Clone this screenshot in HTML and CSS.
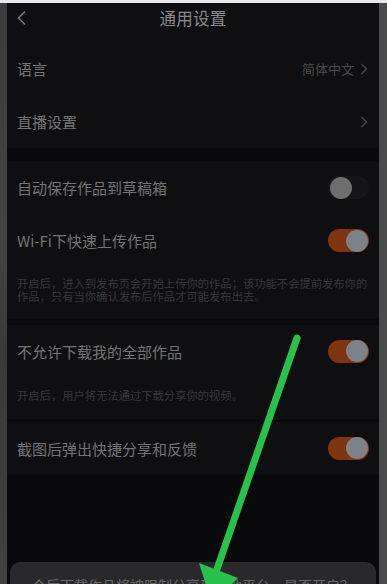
FILE: index.html
```html
<!DOCTYPE html>
<html lang="zh">
<head>
<meta charset="utf-8">
<link rel="stylesheet" href="styles.css">
</head>
<body>
<div class="topline"></div>
<div class="frame">
  <div class="side side-left"></div>
  <div class="screen">
    <div class="header">
      <svg class="back" width="12" height="16" viewBox="0 0 12 16"><path d="M9 1.5 L2.5 8 L9 14.5" fill="none" stroke="#7a7a7a" stroke-width="1.6"/></svg>
      <div class="title">通用设置</div>
    </div>

    <div class="group first">
      <div class="row"><span class="label">语言</span><span class="value">简体中文<svg class="chev" width="8" height="12" viewBox="0 0 8 12"><path d="M1.5 1 L6.5 6 L1.5 11" fill="none" stroke="#4a4a4a" stroke-width="1.4"/></svg></span></div>
      <div class="row"><span class="label">直播设置</span><span class="value"><svg class="chev" width="8" height="12" viewBox="0 0 8 12"><path d="M1.5 1 L6.5 6 L1.5 11" fill="none" stroke="#4a4a4a" stroke-width="1.4"/></svg></span></div>
    </div>

    <div class="group g2">
      <div class="row"><span class="label">自动保存作品到草稿箱</span><span class="toggle off"><span class="knob"></span></span></div>
      <div class="row"><span class="label">Wi-Fi下快速上传作品</span><span class="toggle on"><span class="knob"></span></span></div>
      <div class="desc d1">开启后，进入到发布页会开始上传你的作品；该功能不会提前发布你的作品，只有当你确认发布后作品才可能发布出去。</div>
    </div>

    <div class="group g3">
      <div class="row"><span class="label">不允许下载我的全部作品</span><span class="toggle on"><span class="knob"></span></span></div>
      <div class="desc d2">开启后，用户将无法通过下载分享你的视频。</div>
    </div>

    <div class="group g4">
      <div class="row"><span class="label">截图后弹出快捷分享和反馈</span><span class="toggle on"><span class="knob"></span></span></div>
    </div>

    <div class="filler"></div>
    <div class="sheet"><div class="sheet-text">今后下载作品将被限制分享到其他平台，是否开启？</div></div>
  </div>
  <div class="side side-right"></div>
</div>

<svg class="arrow" width="387" height="584" viewBox="0 0 387 584">
  <line x1="297" y1="338" x2="216" y2="572" stroke="#27c24b" stroke-width="7" stroke-linecap="round"/>
  <polygon points="199,563 238,578 212,604" fill="#27c24b"/>
</svg>
</body>
</html>
```

FILE: styles.css
```css
html, body {
  margin: 0;
  padding: 0;
}
body {
  width: 387px;
  height: 584px;
  overflow: hidden;
  background: #0b0b0d;
  font-family: "Noto Sans CJK SC", "Noto Sans", sans-serif;
  position: relative;
}
.topline {
  height: 3px;
  background: #e9e9e9;
}
.frame {
  display: flex;
  height: 581px;
}
.side-left {
  width: 7px;
  background: linear-gradient(180deg, #3c3c3c, #444 40%, #3a3a3a 60%, #404040);
}
.side-right {
  width: 8px;
  background: #4b4b4b;
}
.screen {
  flex: 1;
  display: flex;
  flex-direction: column;
  background: #0a0a0c;
  overflow: hidden;
}
.header {
  height: 30px;
  display: flex;
  align-items: center;
  justify-content: center;
  position: relative;
  background: #0f0f11;
}
.back {
  position: absolute;
  left: 9px;
  top: 7px;
}
.title {
  color: #8a8a8a;
  font-size: 16.5px;
  letter-spacing: 0.3px;
}
.group {
  background: #0f0f11;
}
.group.first {
  padding-top: 9px;
}
.g2 { margin-top: 13px; }
.g3 { margin-top: 6px; }
.g4 { margin-top: 3px; }
.row {
  height: 53px;
  display: flex;
  align-items: center;
  justify-content: space-between;
  padding: 0 9px 0 10px;
}
.g4 .row, .g3 .row { height: 52px; }
.label {
  color: #747474;
  font-size: 15px;
}
.value {
  color: #4a4a4a;
  font-size: 13px;
  display: flex;
  align-items: center;
  gap: 6px;
  padding-right: 2px;
}
.chev { display: block; }
.toggle {
  width: 41px;
  height: 23px;
  border-radius: 12px;
  position: relative;
  margin-right: 1px;
}
.toggle.off { background: #161618; }
.toggle.on { background: #7e3510; }
.knob {
  position: absolute;
  top: 0.5px;
  width: 22px;
  height: 22px;
  border-radius: 50%;
}
.off .knob { left: 2px; background: #6e6e6e; }
.on .knob { right: 1px; background: #7e8188; }
.desc {
  color: #38383a;
  font-size: 11.3px;
  line-height: 13px;
  padding: 10px 10px 0 10px;
}
.d1 { height: 42px; }
.d2 { height: 30px; padding-top: 12px; }
.filler {
  flex: 1;
}
.sheet {
  height: 22px;
  margin: 0 3px;
  border-radius: 10px 10px 0 0;
  background: #29292b;
  overflow: hidden;
  flex-shrink: 0;
}
.sheet-text {
  color: #6a6a6a;
  font-size: 14px;
  text-align: center;
  padding-top: 13px;
  white-space: nowrap;
}
.arrow {
  position: absolute;
  left: 0;
  top: 0;
  pointer-events: none;
}
```
